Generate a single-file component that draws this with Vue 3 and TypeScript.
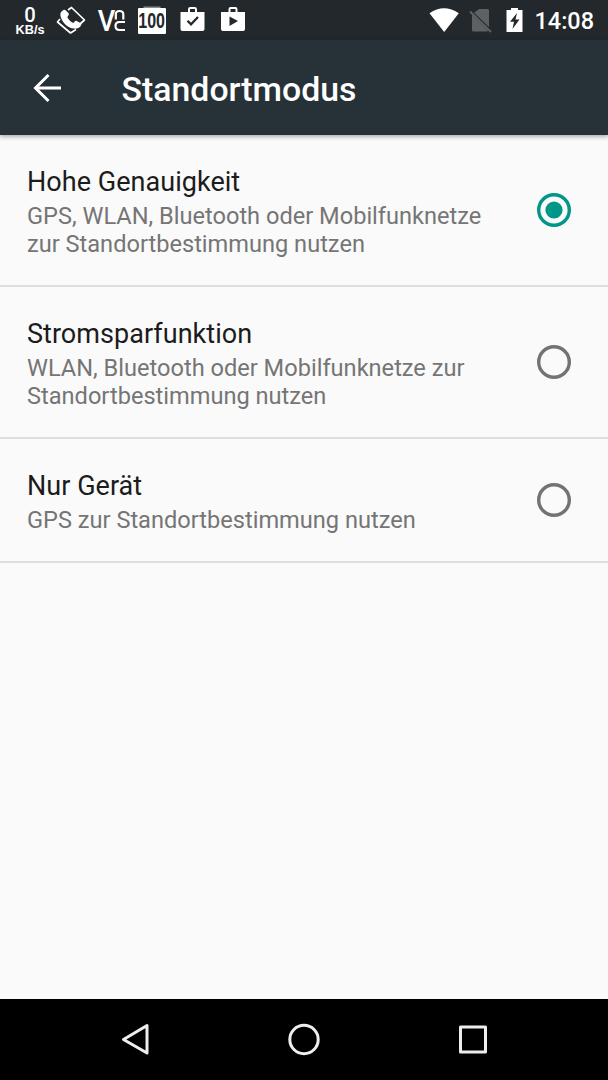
<script setup lang="ts">
import { ref } from 'vue'

interface LocationMode {
  id: string
  title: string
  lines: string[]
}

const modes: LocationMode[] = [
  {
    id: 'high',
    title: 'Hohe Genauigkeit',
    lines: ['GPS, WLAN, Bluetooth oder Mobilfunknetze', 'zur Standortbestimmung nutzen'],
  },
  {
    id: 'saving',
    title: 'Stromsparfunktion',
    lines: ['WLAN, Bluetooth oder Mobilfunknetze zur', 'Standortbestimmung nutzen'],
  },
  {
    id: 'device',
    title: 'Nur Gerät',
    lines: ['GPS zur Standortbestimmung nutzen'],
  },
]

const selected = ref('high')
</script>

<template>
  <div class="screen">
    <header class="status">
      <svg class="left-icons" width="260" height="40" viewBox="0 0 260 40">
        <!-- network speed -->
        <text x="30" y="22" class="speed" text-anchor="middle" textLength="11.500" lengthAdjust="spacingAndGlyphs">0</text>
        <text x="15.500" y="34" class="unit" textLength="29" lengthAdjust="spacingAndGlyphs">KB/s</text>
        <!-- phone with rotating card -->
        <g>
          <path d="M68 10L71.500 7.500L84.500 20L80 24M60 19L57.500 22L70.500 33L76 29.500" fill="none" stroke="#fff" stroke-width="1.700" stroke-linejoin="round" />
          <path d="M63.500 10C61.500 11 60 12.800 60.400 15.500C61.300 21.500 67.500 28.300 74 28.600C77 28.800 79.500 27.900 81 25.500C81.600 24.500 81.400 23.500 80.500 23L76.700 21C75.900 20.600 75.200 20.800 74.700 21.500L73.300 22.900C70.800 22 68.200 19.400 67.300 17L68.500 15.300C69 14.600 69 13.800 68.400 13L65.600 10.300C65 9.700 64.200 9.600 63.500 10Z" fill="#fff" />
        </g>
        <!-- VNC -->
        <text x="97.800" y="31" class="vnc-v" textLength="17.500" lengthAdjust="spacingAndGlyphs">V</text>
        <path d="M115.800 19.500V14.500Q115.800 11 119.500 11Q123.300 11 123.300 14.500V19.500M125 22H119.500Q115.500 22 115.500 26Q115.500 30 119.500 30H125" fill="none" stroke="#fff" stroke-width="2.200" />
        <!-- battery percentage -->
        <path d="M143.500 6.500H160.500V8H143.500Z" fill="#8b9092" />
        <rect x="138" y="8" width="28" height="26" rx="1" fill="#fff" />
        <text x="138.300" y="28" class="percent" textLength="26.700" lengthAdjust="spacingAndGlyphs">100</text>
        <!-- shopping bags -->
        <g v-for="x in [180, 220.500]" :key="x" :transform="`translate(${x} 0)`">
          <path d="M9 12V9.200Q9 8 10.200 8H14.800Q16 8 16 9.200V12" fill="none" stroke="#fff" stroke-width="2" />
          <path d="M.5 12H24.500V29Q24.500 31 22.500 31H2.500Q.5 31 .5 29Z" fill="#fff" />
        </g>
        <path d="M187.500 20.800L191 24.300L198 17" fill="none" stroke="#22282c" stroke-width="2.300" />
        <path d="M229.500 16.500L238 21L229.500 26Z" fill="#22282c" />
      </svg>
      <svg class="right-icons" width="188" height="40" viewBox="420 0 188 40">
        <path d="M429.500 13.200Q444 3.300 458.800 13.200L444.200 32Z" fill="#fff" />
        <path d="M479 9H487.500Q489 9 489 10.500V27L474 12.800ZM472 14.500L488 30.500Q487.500 31.500 486.500 31.500H473.500Q472 31.500 472 30Z" fill="#5d6164" />
        <path d="M470 11.500L491 32" stroke="#5d6164" stroke-width="2" />
        <path d="M511 8H518V10H522.500V32H506.500V10H511Z" fill="#fff" />
        <path d="M517 13L510 21.700H514L512.500 29L519.500 19.500H515.500Z" fill="#22282c" />
        <text x="534.500" y="29.300" class="clock" textLength="59.500" lengthAdjust="spacingAndGlyphs">14:08</text>
      </svg>
    </header>

    <div class="appbar">
      <svg class="back" width="30" height="30" viewBox="0 0 30 30">
        <path d="M28 15H3M15.500 2L2.500 15L15.500 28" fill="none" stroke="#fff" stroke-width="3" />
      </svg>
      <h1>Standortmodus</h1>
    </div>

    <main>
      <div v-for="mode in modes" :key="mode.id" class="row" @click="selected = mode.id">
        <div class="copy">
          <div class="title">{{ mode.title }}</div>
          <div v-for="line in mode.lines" :key="line" class="summary">{{ line }}</div>
        </div>
        <svg class="radio" :class="{ on: selected === mode.id }" width="36" height="36" viewBox="0 0 36 36">
          <circle cx="18" cy="18" r="15.300" fill="none" stroke="currentColor" stroke-width="3.400" />
          <circle v-if="selected === mode.id" cx="18" cy="18" r="8.600" fill="currentColor" />
        </svg>
      </div>
    </main>

    <nav>
      <svg width="608" height="81" viewBox="0 0 608 81">
        <g fill="none" stroke="#eee" stroke-width="3" stroke-linejoin="round">
          <path d="M147 26.500V54L123.500 40.500Z" />
          <circle cx="304" cy="40.500" r="14.200" />
          <rect x="460.500" y="28" width="25" height="25" />
        </g>
      </svg>
    </nav>
  </div>
</template>

<style>
body {
  margin: 0;
  background: #fafafa;
}
</style>

<style scoped>
.screen {
  width: 608px;
  height: 1080px;
  display: flex;
  flex-direction: column;
  overflow: hidden;
  background: #fafafa;
  font-family: Roboto, sans-serif;
}
.status {
  height: 40px;
  flex: none;
  display: flex;
  justify-content: space-between;
  background: #22282c;
}
.status text {
  fill: #fff;
}
.speed {
  font: 500 21px Roboto, sans-serif;
}
.unit {
  font: 700 12px "Liberation Sans", sans-serif;
}
.vnc-v {
  font: 500 29px Roboto, sans-serif;
}
.status .percent {
  font: 700 22.5px "Liberation Sans", sans-serif;
  fill: #22282c;
}
.clock {
  font: 500 24px Roboto, sans-serif;
}
.appbar {
  height: 95px;
  flex: none;
  display: flex;
  align-items: center;
  background: #273238;
  box-shadow: 0 2px 4px rgba(0, 0, 0, 0.3);
  z-index: 1;
}
.back {
  margin: 1px 0 0 33px;
}
h1 {
  margin: 5px 0 0 58.6px;
  font-size: 33.8px;
  line-height: 40px;
  font-weight: 500;
  color: #fff;
}
main {
  flex: 1;
}
.row {
  display: flex;
  align-items: center;
  justify-content: space-between;
  padding: 31px 36px 27px 27px;
  border-bottom: 2px solid #dedede;
}
.title {
  font-size: 27px;
  line-height: 32px;
  margin-bottom: 4px;
  letter-spacing: 0.04px;
  color: #1c1c1c;
  white-space: nowrap;
}
.summary {
  font-size: 23.6px;
  line-height: 28px;
  color: #757575;
  white-space: nowrap;
}
.radio {
  flex: none;
  margin-bottom: 4px;
  color: #737373;
}
.radio.on {
  color: #009688;
}
nav {
  height: 81px;
  flex: none;
  background: #000;
}
nav svg {
  display: block;
}
</style>
